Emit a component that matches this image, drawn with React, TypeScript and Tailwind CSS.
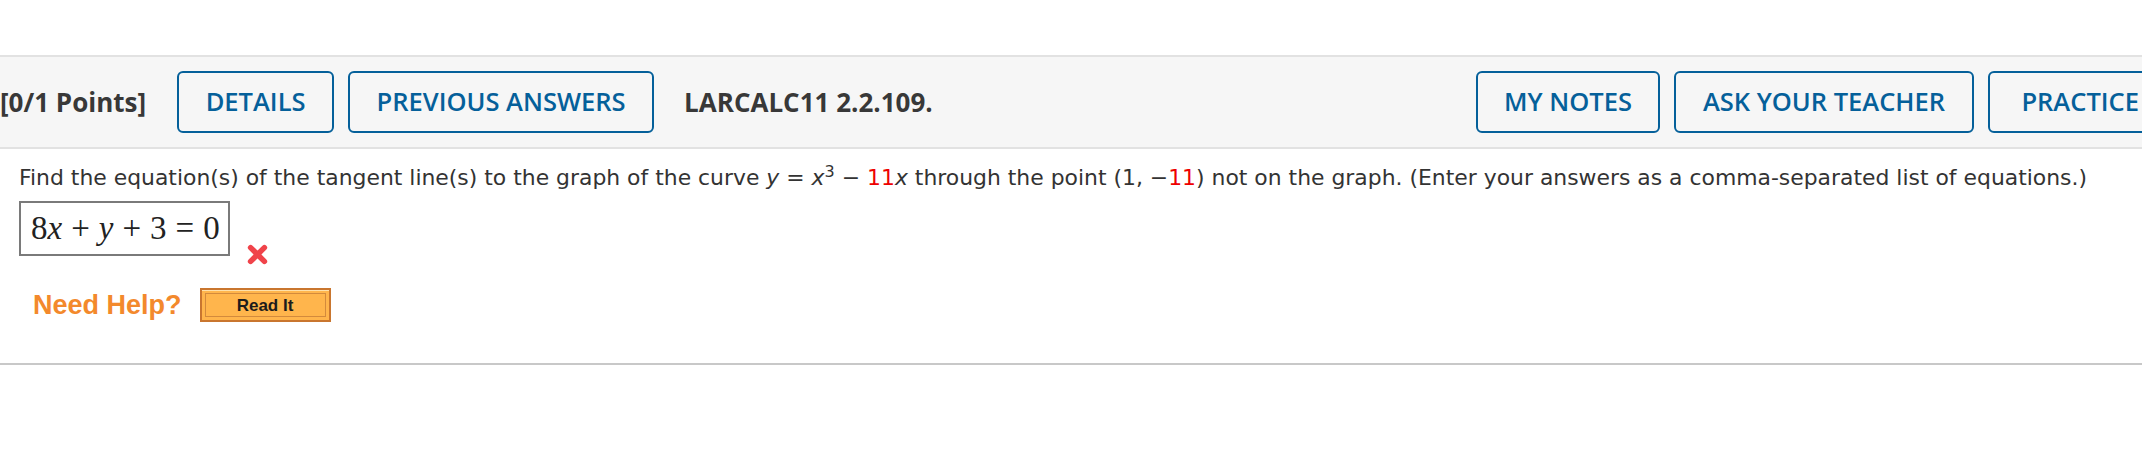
import React from "react";

const leftButtons = [
  { label: "DETAILS", width: "w-[157px]" },
  { label: "PREVIOUS ANSWERS", width: "w-[306px]" },
];

const rightButtons = [
  { label: "MY NOTES", width: "w-[184px]" },
  { label: "ASK YOUR TEACHER", width: "w-[300px]" },
  { label: "PRACTICE ANOTHER", width: "w-[312px]" },
];

const HeaderButton = ({ label, width }: { label: string; width: string }) => (
  <button
    className={`${width} h-[62px] shrink-0 whitespace-nowrap rounded-[6px] border-2 border-[#05609a] text-[25.5px] font-semibold leading-none text-[#05609a]`}
  >
    {label}
  </button>
);

const WrongMark = () => (
  <svg width="23" height="23" viewBox="0 0 20 20" className="mt-[42px] shrink-0">
    <path
      d="M4 4 L16 16 M16 4 L4 16"
      stroke="#f0434a"
      strokeWidth="4.8"
      strokeLinecap="round"
    />
  </svg>
);

const App = () => {
  return (
    <div className="h-[456px] w-full overflow-hidden bg-white pt-[55px]">
      {/* question header band */}
      <div className="border-y-2 border-[#e2e2e2] bg-[#f6f6f6] py-[14px] font-['Open_Sans',sans-serif]">
        <div className="flex w-[2300px] items-center justify-between">
          <div className="flex items-center">
            <span className="mr-[31px] whitespace-nowrap text-[26px] font-bold text-[#383838]">
              [0/1 Points]
            </span>
            <div className="flex gap-[14px]">
              {leftButtons.map((b) => (
                <HeaderButton key={b.label} label={b.label} width={b.width} />
              ))}
            </div>
            <span className="ml-[30px] whitespace-nowrap text-[26px] font-bold text-[#383838]">
              LARCALC11 2.2.109.
            </span>
          </div>
          <div className="flex gap-[14px]">
            {rightButtons.map((b) => (
              <HeaderButton key={b.label} label={b.label} width={b.width} />
            ))}
          </div>
        </div>
      </div>

      {/* question body */}
      <div className="pl-[19px] pt-[14px]">
        <p className="whitespace-nowrap font-['DejaVu_Sans',sans-serif] text-[21.9px] leading-[30px] text-[#333]">
          Find the equation(s) of the tangent line(s) to the graph of the curve{" "}
          <i>y</i> = <i>x</i>
          <sup className="text-[16px]">3</sup> − <span className="text-[#e00]">11</span>
          <i>x</i> through the point (1, −<span className="text-[#e00]">11</span>) not on the
          graph. (Enter your answers as a comma-separated list of equations.)
        </p>

        <div className="mt-[8px] flex items-start gap-[16px]">
          <div className="flex h-[55px] w-[211px] items-center border-2 border-[#7a7a7a] bg-white pl-[10px] font-['Liberation_Serif',serif] text-[33px] leading-none text-[#222]">
            <span>8</span>
            <i>x</i>
            <span className="mx-[9px]">+</span>
            <i>y</i>
            <span className="mx-[9px]">+</span>
            <span>3</span>
            <span className="mx-[9px]">=</span>
            <span>0</span>
          </div>
          <WrongMark />
        </div>

        <div className="mt-[19px] flex items-center gap-[18px] pl-[14px]">
          <span className="font-['Liberation_Sans',sans-serif] text-[27px] font-bold text-[#f3892c]">
            Need Help?
          </span>
          <button className="h-[34px] w-[131px] border-2 border-[#c9762f] bg-[#ffb54c] p-[3px] shadow-[inset_0_1px_0_#ffe0a8]">
            <div className="flex h-full items-center justify-center border border-[#d38a3c] font-['Liberation_Sans',sans-serif] text-[17px] font-bold leading-none text-[#1c1c1c]">
              Read It
            </div>
          </button>
        </div>
      </div>

      <div className="mt-[37px] border-t-2 border-[#c8c8c8]" />
    </div>
  );
};

export default App;
